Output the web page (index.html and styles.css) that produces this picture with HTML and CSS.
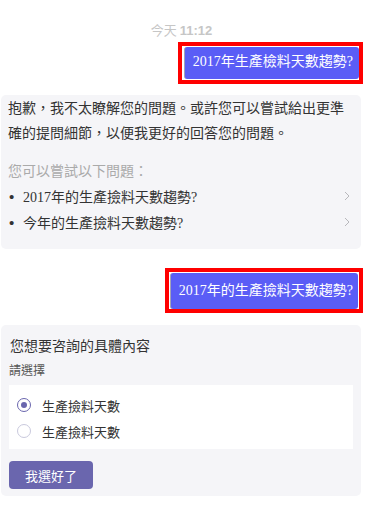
FILE: index.html
```html
<!DOCTYPE html>
<html lang="zh-Hant">
<head>
<meta charset="utf-8">
<link rel="stylesheet" href="styles.css">
</head>
<body>
<div class="chat">
  <div class="time">今天 <b>11:12</b></div>

  <div class="row-right">
    <div class="mark mark-a">
      <div class="bubble bubble-a">2017年生產檢料天數趨勢?</div>
    </div>
  </div>

  <div class="card card-reply">
    <p class="reply-text">抱歉，我不太瞭解您的問題。或許您可以嘗試給出更準確的提問細節，以便我更好的回答您的問題。</p>
    <div class="hint">您可以嘗試以下問題：</div>
    <ul class="suggest">
      <li class="suggest-item"><span class="dot">•</span><span class="suggest-text">2017年的生產撿料天數趨勢?</span><svg class="chev" width="6" height="10" viewBox="0 0 6 10"><path d="M1 1 L5 5 L1 9" fill="none" stroke="#b8b8bc" stroke-width="1"/></svg></li>
      <li class="suggest-item"><span class="dot">•</span><span class="suggest-text">今年的生產撿料天數趨勢?</span><svg class="chev" width="6" height="10" viewBox="0 0 6 10"><path d="M1 1 L5 5 L1 9" fill="none" stroke="#b8b8bc" stroke-width="1"/></svg></li>
    </ul>
  </div>

  <div class="row-right row-second">
    <div class="mark mark-b">
      <div class="bubble bubble-b">2017年的生產撿料天數趨勢?</div>
    </div>
  </div>

  <div class="card card-form">
    <div class="form-title">您想要咨詢的具體內容</div>
    <div class="form-sub">請選擇</div>
    <div class="options">
      <label class="option"><span class="radio radio-on"></span><span class="option-text">生產撿料天數</span></label>
      <label class="option"><span class="radio"></span><span class="option-text">生產撿料天數</span></label>
    </div>
    <button class="btn">我選好了</button>
  </div>
</div>
</body>
</html>
```

FILE: styles.css
```css
html, body {
  margin: 0;
  padding: 0;
  background: #ffffff;
}
body {
  font-family: "Noto Sans CJK TC", "Noto Sans", sans-serif;
  color: #333333;
}
.chat {
  width: 360px;
  margin-left: 1px;
  padding-top: 20px;
}
.time {
  height: 20px;
  line-height: 20px;
  text-align: center;
  font-size: 13px;
  color: #c6c6c6;
  margin-bottom: 2px;
  padding-left: 1px;
}
.time b {
  font-family: "Liberation Sans", sans-serif;
  font-weight: bold;
}
.row-right {
  display: flex;
  justify-content: flex-end;
  margin-right: -2px;
}
.row-second {
  margin-top: 19px;
}
.mark {
  border: 4px solid #ff0000;
  background: #ffffff;
}
.mark-a {
  padding: 1px 0 1px 2px;
}
.mark-b {
  padding: 1px 1px 0 1px;
}
.bubble {
  background: #5a5df6;
  color: #ffffff;
  font-family: "Liberation Serif", "Noto Sans CJK TC", serif;
  font-size: 14px;
  line-height: 16px;
  border-radius: 3px;
  border-left: 1px solid #a3a3b8;
  white-space: nowrap;
}
.bubble-a {
  padding: 7px 6px 9px 8px;
}
.bubble-b {
  padding: 10px 5px 10px 8px;
}
.card {
  background: #f5f5f8;
  border-radius: 5px;
}
.card-reply {
  margin-top: 11px;
  padding: 0 10px 14px 7px;
}
.reply-text {
  margin: 0;
  font-size: 14px;
  line-height: 25px;
  color: #333333;
}
.hint {
  margin-top: 12px;
  font-size: 14px;
  line-height: 26px;
  color: #aaaaaa;
}
.suggest {
  list-style: none;
  margin: 0;
  padding: 0;
}
.suggest-item {
  display: flex;
  align-items: center;
  height: 26px;
  font-family: "Liberation Serif", "Noto Sans CJK TC", serif;
  font-size: 14px;
  color: #333333;
}
.dot {
  width: 14px;
  font-family: "Liberation Sans", sans-serif;
  font-size: 15px;
  padding-left: 1px;
}
.suggest-text {
  flex: 1;
}
.chev {
  margin-right: 1px;
}
.card-form {
  margin-top: 12px;
  padding: 10px 8px 7px 8px;
}
.form-title {
  font-size: 14px;
  line-height: 20px;
  color: #333333;
  padding-left: 1px;
}
.form-sub {
  margin-top: 6px;
  font-size: 12px;
  line-height: 18px;
  color: #555555;
}
.options {
  margin-top: 6px;
  background: #ffffff;
  padding: 7px 0 5px 8px;
}
.option {
  display: flex;
  align-items: center;
  height: 26px;
}
.radio {
  box-sizing: border-box;
  width: 14px;
  height: 14px;
  border-radius: 50%;
  border: 1px solid #c9c9dd;
  display: flex;
  align-items: center;
  justify-content: center;
  margin-right: 11px;
}
.radio-on {
  border-color: #6a66ae;
}
.radio-on::after {
  content: "";
  width: 6px;
  height: 6px;
  border-radius: 50%;
  background: #6a66ae;
}
.option-text {
  font-size: 13px;
  color: #333333;
}
.btn {
  display: block;
  margin-top: 12px;
  width: 84px;
  height: 28px;
  border: none;
  border-radius: 4px;
  background: #6a66ae;
  color: #ffffff;
  font-family: "Noto Sans CJK TC", sans-serif;
  font-size: 13px;
  padding: 0;
}
```
